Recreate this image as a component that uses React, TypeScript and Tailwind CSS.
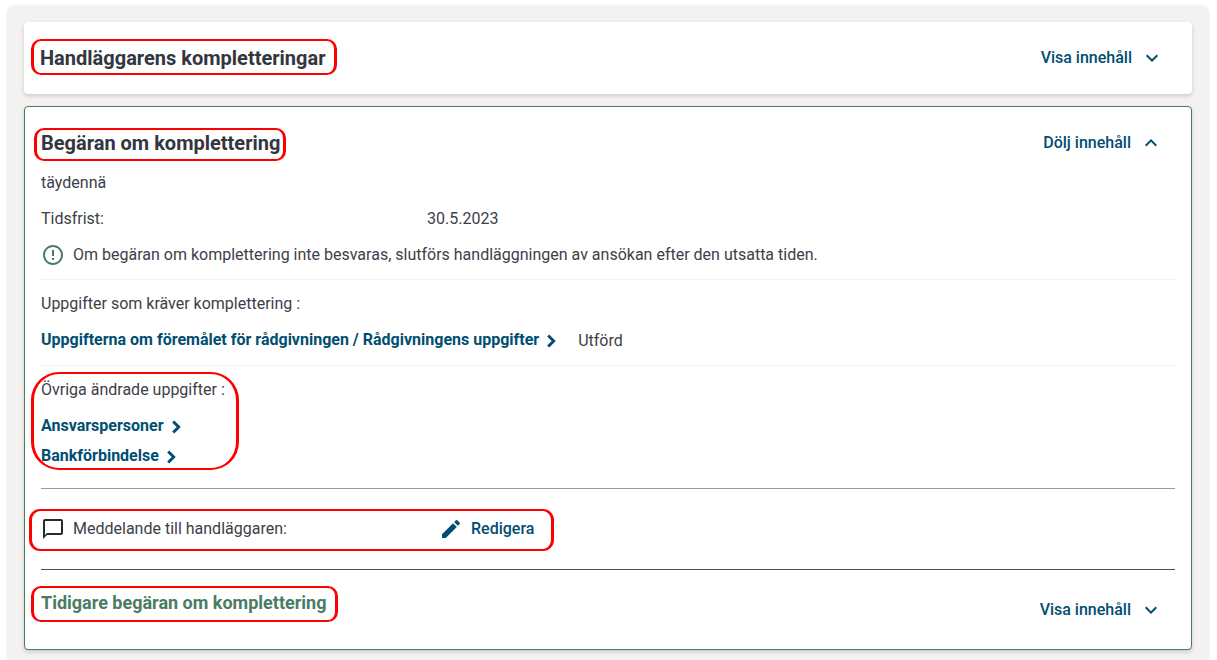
import React, { useState } from 'react';
import { MdEdit, MdErrorOutline, MdExpandLess, MdExpandMore, MdOutlineChatBubbleOutline } from 'react-icons/md';

interface ToggleButtonProps {
  open: boolean;
  onClick: () => void;
}

const ToggleButton: React.FC<ToggleButtonProps> = ({ open, onClick }) => (
  <button
    type="button"
    aria-expanded={open}
    onClick={onClick}
    className="flex h-10 shrink-0 items-center gap-2 px-3 font-medium text-[#004e71] cursor-pointer"
  >
    {open ? 'Dölj innehåll' : 'Visa innehåll'}
    {open ? <MdExpandLess size={24} /> : <MdExpandMore size={24} />}
  </button>
);

// Red outline drawn over the part of the page being pointed out
const Highlight: React.FC<{ className: string }> = ({ className }) => (
  <span
    aria-hidden="true"
    className={`pointer-events-none absolute border-x-3 border-y-2 border-[#ff0000] ${className}`}
  />
);

const SectionLink: React.FC<{ children: React.ReactNode }> = ({ children }) => (
  <a href="#" className="flex w-fit items-center gap-2 self-start font-bold text-[#004e71]">
    {children}
    <svg width="9" height="14" viewBox="0 0 9 14" fill="none" className="mt-0.5" aria-hidden="true">
      <path d="M1.2 1.5 6.7 7l-5.5 5.5" stroke="currentColor" strokeWidth="2.9" />
    </svg>
  </a>
);

const changedSections = ['Ansvarspersoner', 'Bankförbindelse'];

const App: React.FC = () => {
  const [additionsOpen, setAdditionsOpen] = useState(false);
  const [requestOpen, setRequestOpen] = useState(true);
  const [earlierOpen, setEarlierOpen] = useState(false);

  return (
    <div className="bg-white pt-1.5 pr-2 pl-[7px] font-['Roboto',sans-serif] text-base text-[#3c4048]">
      <main className="space-y-3 rounded-t-lg bg-[#f3f2f1] px-[17px] pt-4 pb-2.5 shadow-[0_0_3px_rgba(0,0,0,0.08)]">
        <section className="flex items-center justify-between rounded bg-white p-4 shadow-[0_2px_4px_rgba(0,0,0,0.16)]">
          <h2 className="relative text-xl font-bold text-[#32363e]">
            Handläggarens kompletteringar
            <Highlight className="-top-[5px] -right-[11px] -bottom-[3px] -left-[9px] rounded-[10px]" />
          </h2>
          <ToggleButton open={additionsOpen} onClick={() => setAdditionsOpen(!additionsOpen)} />
        </section>

        <section className="rounded border border-[#4a7c63] bg-white px-4 pt-4 pb-[19px] shadow-[0_2px_4px_rgba(0,0,0,0.16)]">
          <div className="flex items-center justify-between">
            <h2 className="relative text-xl font-bold text-[#32363e]">
              Begäran om komplettering
              <Highlight className="-top-px -right-1.5 -bottom-1 -left-[7px] rounded-[10px]" />
            </h2>
            <ToggleButton open={requestOpen} onClick={() => setRequestOpen(!requestOpen)} />
          </div>

          {requestOpen && (
            <>
              <div className="space-y-3 border-b border-[#f1f1f1] pt-2 pb-3">
                <p>täydennä</p>
                <dl className="grid grid-cols-3 gap-6">
                  <dt>Tidsfrist:</dt>
                  <dd>30.5.2023</dd>
                </dl>
                <p className="flex items-center gap-2">
                  <MdErrorOutline size={24} className="shrink-0 text-[#4a7c63]" />
                  Om begäran om komplettering inte besvaras, slutförs handläggningen av ansökan efter den utsatta tiden.
                </p>
              </div>

              <div className="space-y-3 border-b border-[#f1f1f1] py-3">
                <p>Uppgifter som kräver komplettering :</p>
                <div className="flex h-[25px] items-center gap-[22px]">
                  <SectionLink>Uppgifterna om föremålet för rådgivningen / Rådgivningens uppgifter</SectionLink>
                  <span>Utförd</span>
                </div>
              </div>

              <div className="border-b border-[#96979a] pt-3 pb-5">
                <div className="relative w-fit">
                  <p>Övriga ändrade uppgifter :</p>
                  <ul className="mt-3 space-y-1.5">
                    {changedSections.map((name) => (
                      <li key={name}>
                        <SectionLink>{name}</SectionLink>
                      </li>
                    ))}
                  </ul>
                  <Highlight className="-top-1.5 -right-3.5 -bottom-0.5 -left-2.5 rounded-[28px]" />
                </div>
              </div>

              <div className="border-b border-[#4b4d55] py-5">
                <div className="relative grid grid-cols-3 items-center gap-6">
                  <p className="flex items-center gap-2">
                    <MdOutlineChatBubbleOutline size={24} className="shrink-0 text-[#262a33]" />
                    Meddelande till handläggaren:
                  </p>
                  <button
                    type="button"
                    className="flex h-10 w-fit items-center gap-2 px-3 font-medium text-[#004e71] cursor-pointer"
                  >
                    <MdEdit size={24} />
                    Redigera
                  </button>
                  <Highlight className="top-0 -bottom-0.5 -left-3 w-[525px] rounded-[11px]" />
                </div>
              </div>
            </>
          )}

          <div className="flex items-start justify-between pt-5">
            <h3 className="relative text-lg leading-[26px] font-bold text-[#4a7c63]">
              Tidigare begäran om komplettering
              <Highlight className="-top-1 -right-3 -bottom-1.5 -left-2.5 rounded-[10px]" />
            </h3>
            <ToggleButton open={earlierOpen} onClick={() => setEarlierOpen(!earlierOpen)} />
          </div>
        </section>
      </main>
    </div>
  );
};

export default App;
